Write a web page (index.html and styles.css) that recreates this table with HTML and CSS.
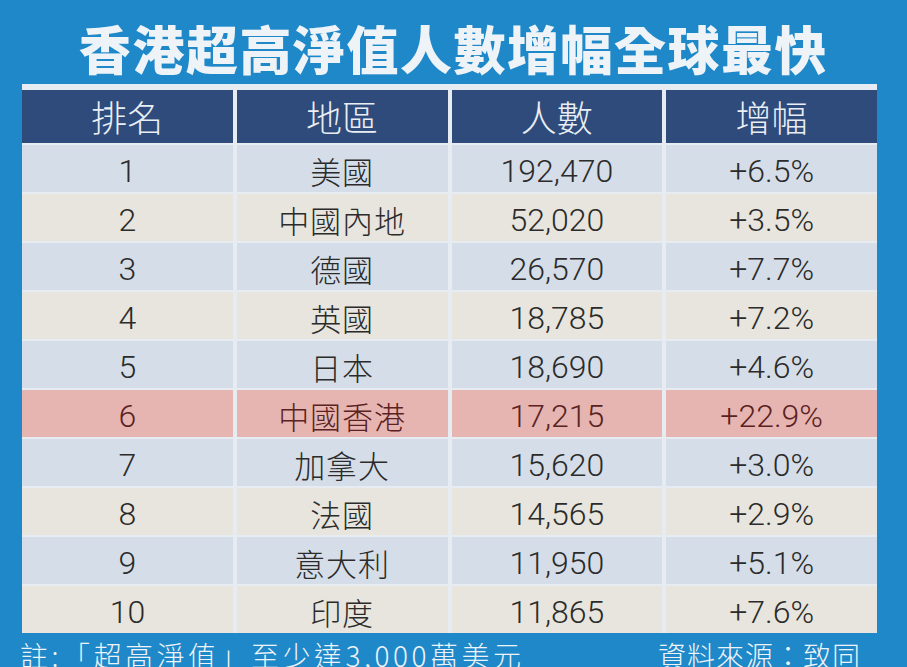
FILE: index.html
```html
<!DOCTYPE html>
<html lang="zh-Hant">
<head>
<meta charset="utf-8">
<title>香港超高淨值人數增幅全球最快</title>
<link rel="stylesheet" href="styles.css">
</head>
<body>
<div class="page">
  <h1 class="title">香港超高淨值人數增幅全球最快</h1>
  <div class="table">
    <div class="th">排名</div><div class="th">地區</div><div class="th">人數</div><div class="th">增幅</div>

    <div class="td odd num">1</div><div class="td odd zh">美國</div><div class="td odd num">192,470</div><div class="td odd num">+6.5%</div>
    <div class="td even num">2</div><div class="td even zh">中國內地</div><div class="td even num">52,020</div><div class="td even num">+3.5%</div>
    <div class="td odd num">3</div><div class="td odd zh">德國</div><div class="td odd num">26,570</div><div class="td odd num">+7.7%</div>
    <div class="td even num">4</div><div class="td even zh">英國</div><div class="td even num">18,785</div><div class="td even num">+7.2%</div>
    <div class="td odd num">5</div><div class="td odd zh">日本</div><div class="td odd num">18,690</div><div class="td odd num">+4.6%</div>
    <div class="td hl num">6</div><div class="td hl zh">中國香港</div><div class="td hl num">17,215</div><div class="td hl num">+22.9%</div>
    <div class="td odd num">7</div><div class="td odd zh">加拿大</div><div class="td odd num">15,620</div><div class="td odd num">+3.0%</div>
    <div class="td even num">8</div><div class="td even zh">法國</div><div class="td even num">14,565</div><div class="td even num">+2.9%</div>
    <div class="td odd num">9</div><div class="td odd zh">意大利</div><div class="td odd num">11,950</div><div class="td odd num">+5.1%</div>
    <div class="td even num">10</div><div class="td even zh">印度</div><div class="td even num">11,865</div><div class="td even num">+7.6%</div>
  </div>
  <div class="footer">
    <span class="note">註:「超高淨值」至少達3,000萬美元</span>
    <span class="source">資料來源：致同</span>
  </div>
</div>
</body>
</html>
```

FILE: styles.css
```css
html, body {
  margin: 0;
  padding: 0;
}
body {
  background: #1f88c9;
  width: 907px;
  height: 667px;
  overflow: hidden;
}
.page {
  display: flex;
  flex-direction: column;
}
.title {
  margin: 0;
  height: 84px;
  box-sizing: border-box;
  padding: 22px 0 0 0;
  text-align: center;
  font-family: "Noto Sans CJK TC", "Noto Sans CJK SC", sans-serif;
  font-weight: 900;
  font-size: 52px;
  line-height: 52px;
  letter-spacing: 1.5px;
  color: #eef3f8;
}
.table {
  margin-left: 22px;
  width: 855px;
  box-sizing: border-box;
  padding-top: 6px;
  background: #e6ecf1;
  display: grid;
  grid-template-columns: repeat(4, 1fr);
  grid-template-rows: 53px repeat(10, 47px);
  column-gap: 4px;
  row-gap: 2px;
}
.th {
  background: #2e4b7b;
  color: #e9eef4;
  display: flex;
  align-items: center;
  justify-content: center;
  font-family: "Noto Sans CJK TC", "Noto Sans CJK SC", sans-serif;
  font-weight: 300;
  font-size: 36px;
  line-height: 36px;
  padding-bottom: 2px;
  box-sizing: border-box;
}
.td {
  display: flex;
  align-items: center;
  justify-content: center;
  color: #2b2b2b;
  box-sizing: border-box;
  padding-top: 4px;
}
.odd { background: #d5dee8; }
.even { background: #e7e5dd; }
.hl { background: #e7b5b1; color: #5a2222; }
.num {
  font-family: Roboto, "Liberation Sans", sans-serif;
  font-weight: 300;
  font-size: 32px;
}
.zh {
  font-family: "Noto Sans CJK TC", "Noto Sans CJK SC", sans-serif;
  font-weight: 300;
  font-size: 31px;
  letter-spacing: 1px;
}
.footer {
  margin-top: 8px;
  display: flex;
  justify-content: space-between;
  padding: 0 46px 0 20px;
  font-family: "Noto Sans CJK TC", "Noto Sans CJK SC", sans-serif;
  font-weight: 300;
  font-size: 28px;
  line-height: 28px;
  color: #eef3f8;
}
.note { letter-spacing: 3.5px; }
.source { letter-spacing: 1px; }
```
